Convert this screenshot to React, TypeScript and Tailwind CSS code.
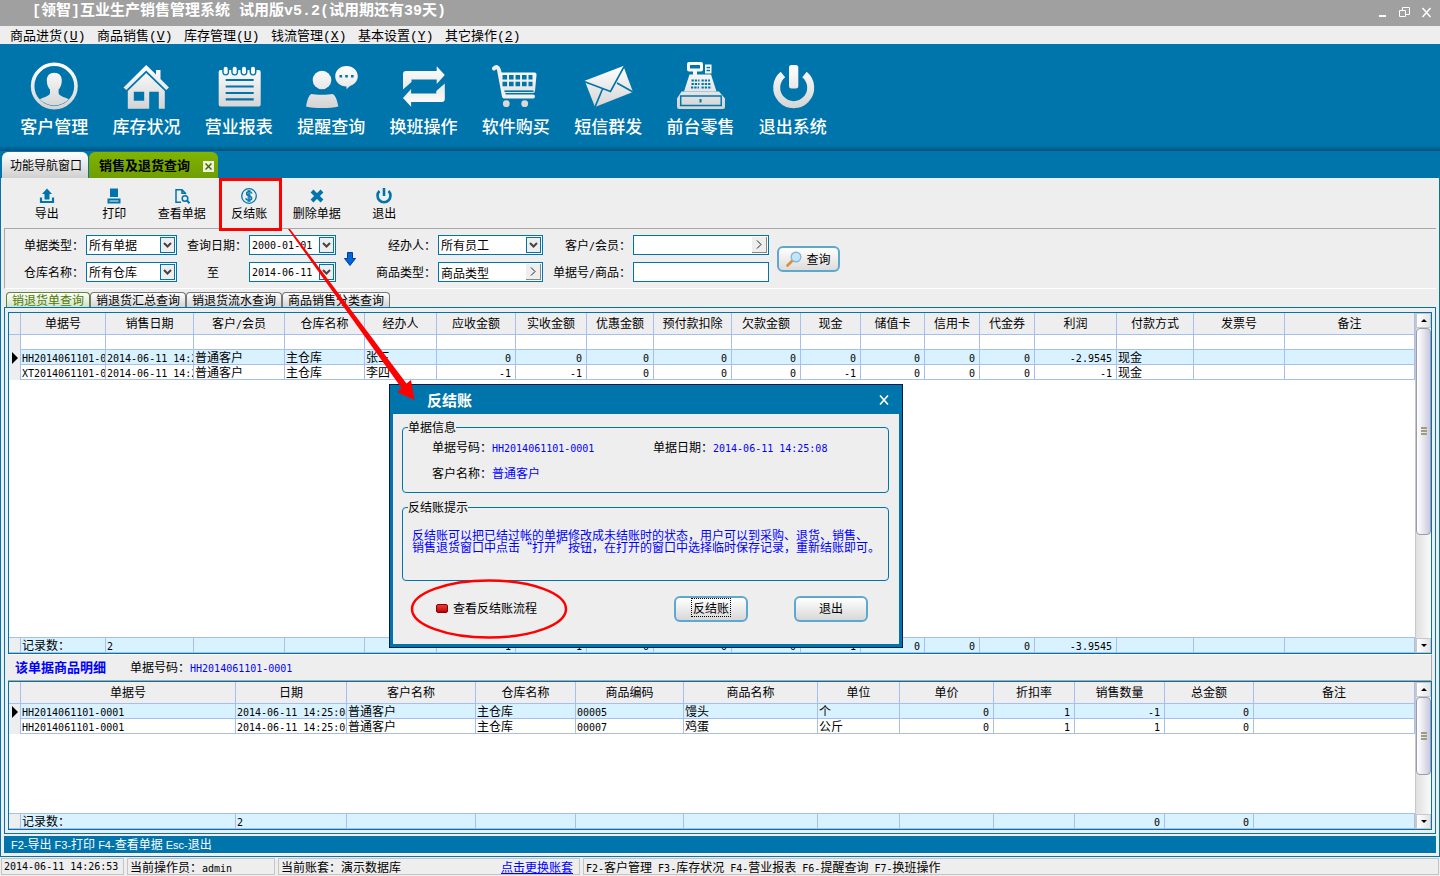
import React, { FC, ReactNode } from 'react'
import classNames from 'clsx'

// Wraps latin runs so that they keep a six pixel pitch next to 12px hanzi
const Txt: FC<{ children: string; latin?: string }> = ({
  children,
  latin = "font-['DejaVu_Sans_Mono',monospace] text-[10px] leading-none",
}) => (
  <>
    {children.split(/([\x20-\x7e]+)/).map((part, i) =>
      i % 2 ? (
        <span key={i} className={classNames('whitespace-pre', latin)}>
          {part}
        </span>
      ) : (
        part
      )
    )}
  </>
)

const menus = [
  ['商品进货', 'U'],
  ['商品销售', 'V'],
  ['库存管理', 'U'],
  ['钱流管理', 'X'],
  ['基本设置', 'Y'],
  ['其它操作', '2'],
]

const BLUE = '#0075ac'

const bigTools: { label: string; icon: ReactNode }[] = [
  {
    label: '客户管理',
    icon: (
      <>
        <circle cx="24.3" cy="24" r="21.7" fill="none" stroke="url(#metal)" strokeWidth="3.6" />
        <path d="M24.3 10.7c4.800 0 7.500 3 7.500 7.600 0 4.200-1.200 7.200-3.200 9.400v3.400c.4 3.400 6.200 4 10.200 6.100A20 20 0 0 1 9.800 37.200c4-2.100 9.800-2.700 10.200-6.100v-3.400c-2-2.200-3.200-5.200-3.200-9.400 0-4.600 2.700-7.600 7.500-7.600z" />
      </>
    ),
  },
  {
    label: '库存状况',
    icon: (
      <>
        <path d="M24.200 3 34 12.500V8h4.500v9L47 25.500 44.200 28 24.200 8.500 4.300 28 1.500 25.500z" />
        <path
          fillRule="evenodd"
          d="M24.200 11 42.800 29v17.700h-6v-17h-9.600v17H5.800V29zM11.800 29.700v9h10.400v-9z"
        />
      </>
    ),
  },
  {
    label: '营业报表',
    icon: (
      <>
        <rect x="3.700" y="8" width="42" height="36.500" rx="2" />
        {[10.7, 19.7, 29, 38].map((x) => (
          <React.Fragment key={x}>
            <path d={`M${x - 3.5} 7.500v2a3.500 4 0 0 0 7 0v-2z`} fill={BLUE} />
            <rect x={x - 2} y="4.700" width="4" height="7.500" rx="2" />
          </React.Fragment>
        ))}
        <path d="M10.700 18h28M10.700 24.500h28M10.700 31h28M10.700 37.300h28" stroke={BLUE} strokeWidth="2.200" />
      </>
    ),
  },
  {
    label: '提醒查询',
    icon: (
      <>
        <circle cx="15" cy="18" r="9.300" />
        <path d="M-1 44.500C.5 37 2 33 4.500 32c3.500 1 17 1 21 0 2.500 1 4.500 5 5.800 12.500-8 2-24 2-32.300 0z" />
        <path d="M39.500 4c6.500 0 11.300 4.500 11.300 10.300 0 4.600-3.300 8.300-7.800 9.700l-3.500 3.200v-2.700c-6.500 0-11.300-4.500-11.300-10.200S33 4 39.500 4z" />
        <path d="M32.500 14.300h2.600M38.200 14.300h2.600M44 14.300h2.600" stroke={BLUE} strokeWidth="2.600" />
      </>
    ),
  },
  {
    label: '换班操作',
    icon: (
      <>
        <path d="M4 27.500V12q0-3 3-3h30.700V4.300L45.800 13l-8.100 9v-4.500H12.500V20z" />
        <path
          transform="rotate(180 24.900 24.500)"
          d="M4 27.500V12q0-3 3-3h30.700V4.300L45.800 13l-8.100 9v-4.500H12.500V20z"
        />
      </>
    ),
  },
  {
    label: '软件购买',
    icon: (
      <>
        <path
          d="M2 6.500Q5.500 3 7 8l5 26.500h29"
          fill="none"
          stroke="#f0f0f0"
          strokeWidth="4"
          strokeLinecap="round"
          strokeLinejoin="round"
        />
        <path d="M8 10.500h34.500q2.300 0 2 2.500l-1.500 16q-.2 2-2 2H12z" />
        <path
          d="M10.500 15.300h30M10.500 22h30"
          stroke={BLUE}
          strokeWidth="4.600"
          strokeDasharray="4.600 1.900"
        />
        <path d="M12.500 29.200h29" stroke={BLUE} strokeWidth="1.600" />
        <circle cx="14.300" cy="41.700" r="3.400" />
        <circle cx="32.700" cy="41.700" r="3.400" />
      </>
    ),
  },
  {
    label: '短信群发',
    icon: (
      <>
        <path d="M.7 18.700 39.300 4 49 30 11 45z" />
        <path
          d="M.7 19.700 26.500 29.500 40 4.700M11 45l7.500-18M49 30 33 21"
          fill="none"
          stroke={BLUE}
          strokeWidth="1.700"
        />
      </>
    ),
  },
  {
    label: '前台零售',
    icon: (
      <>
        <path
          fillRule="evenodd"
          d="M13 0h12q2 0 2 2v5.500q0 2-2 2h-4V13h-4V9.500h-4q-2 0-2-2V2q0-2 2-2zm1 3v3.500h10V3z"
        />
        <path d="M29 2.500h6.500v9H29z" />
        <path d="M13.500 12.500h21.500l5.500 17H8z" />
        <path d="M30.500 5.500h3.500M30.500 8.500h3.500" stroke={BLUE} strokeWidth="1.300" />
        <path
          d="M15.500 18.500h8M15.500 22h8M15 25.500h8M25.500 18.500h8.500M25.500 22h9M25.500 25.500h10"
          stroke={BLUE}
          strokeWidth="2"
          strokeDasharray="2.300 1"
        />
        <path d="M5.500 29.500H43l6 7v8.500q0 2-2 2H3q-2 0-2-2v-8.500z" />
        <rect x="4.700" y="34" width="40.500" height="9.500" fill="none" stroke={BLUE} strokeWidth="1.500" />
        <path d="M24.500 37v3.500" stroke={BLUE} strokeWidth="2" />
      </>
    ),
  },
  {
    label: '退出系统',
    icon: (
      <>
        <path
          d="M35.500 12.500a17 17 0 1 1-21.600 0"
          fill="none"
          stroke="url(#metal)"
          strokeWidth="7"
        />
        <rect x="20" y="3" width="9.300" height="23.500" rx="2.500" />
      </>
    ),
  },
]

const smallTools: { label: string; icon: ReactNode }[] = [
  {
    label: '导出',
    icon: (
      <>
        <path d="M8 .5l5 5.500h-2.500v5.500h-5V6H3z" />
        <path d="M2 9.500v4.500h12V9.500" fill="none" stroke={BLUE} strokeWidth="2.200" />
      </>
    ),
  },
  {
    label: '打印',
    icon: (
      <>
        <path d="M4 .5h8V9H4zM1.500 10.500h13v5h-13z" />
        <path d="M3.500 13h9" stroke="#eeeeee" />
      </>
    ),
  },
  {
    label: '查看单据',
    icon: (
      <g fill="none" stroke={BLUE} strokeWidth="1.500">
        <path d="M7 14.300H2V1.700h6l3.500 3.600v1M8 1.700v3.600h3" />
        <circle cx="11" cy="10.500" r="2.800" />
        <path d="M13 12.500l2.500 2.800" strokeWidth="2" />
      </g>
    ),
  },
  {
    label: '反结账',
    icon: (
      <g fill="none" stroke={BLUE}>
        <circle cx="8" cy="8" r="7.300" strokeWidth="1.300" />
        <path
          d="M11 5.500C10.500 4 9.500 3.600 8 3.600 4.800 3.600 4.500 7 8 7.800c4 .9 3.500 4.500 0 4.500-2 0-3-.7-3.300-2.200M7.200 2v12M8.800 2v12"
          strokeWidth="1.200"
        />
      </g>
    ),
  },
  {
    label: '删除单据',
    icon: <path d="M3 3l10 10M13 3L3 13" stroke={BLUE} strokeWidth="4" />,
  },
  {
    label: '退出',
    icon: (
      <>
        <path d="M12.500 3a6.500 6.500 0 1 1-9 0" fill="none" stroke={BLUE} strokeWidth="2.600" />
        <path d="M6.700 0h2.600v8H6.700z" />
      </>
    ),
  },
]

type Column = [title: string, width: string, align?: 'right']

const salesColumns: Column[] = [
  ['单据号', 'w-[85px]'],
  ['销售日期', 'w-[88px]'],
  ['客户/会员', 'w-[91px]'],
  ['仓库名称', 'w-[80px]'],
  ['经办人', 'w-[72px]'],
  ['应收金额', 'w-[79px]', 'right'],
  ['实收金额', 'w-[71px]', 'right'],
  ['优惠金额', 'w-[67px]', 'right'],
  ['预付款扣除', 'w-[78px]', 'right'],
  ['欠款金额', 'w-[69px]', 'right'],
  ['现金', 'w-[60px]', 'right'],
  ['储值卡', 'w-[64px]', 'right'],
  ['信用卡', 'w-[55px]', 'right'],
  ['代金券', 'w-[55px]', 'right'],
  ['利润', 'w-[82px]', 'right'],
  ['付款方式', 'w-[77px]'],
  ['发票号', 'w-[91px]'],
  ['备注', ''],
]

const salesRows = [
  [],
  ['HH2014061101-0001', '2014-06-11 14:25:08', '普通客户', '主仓库', '张三', '0', '0', '0', '0', '0', '0', '0', '0', '0', '-2.9545', '现金'],
  ['XT2014061101-0001', '2014-06-11 14:25:08', '普通客户', '主仓库', '李四', '-1', '-1', '0', '0', '0', '-1', '0', '0', '0', '-1', '现金'],
]

const salesTotals = ['记录数：', '2', '', '', '', '-1', '-1', '0', '0', '0', '-1', '0', '0', '0', '-3.9545']

const detailColumns: Column[] = [
  ['单据号', 'w-[215px]'],
  ['日期', 'w-[111px]'],
  ['客户名称', 'w-[129px]'],
  ['仓库名称', 'w-[100px]'],
  ['商品编码', 'w-[108px]'],
  ['商品名称', 'w-[134px]'],
  ['单位', 'w-[82px]'],
  ['单价', 'w-[94px]', 'right'],
  ['折扣率', 'w-[81px]', 'right'],
  ['销售数量', 'w-[90px]', 'right'],
  ['总金额', 'w-[89px]', 'right'],
  ['备注', ''],
]

const detailRows = [
  ['HH2014061101-0001', '2014-06-11 14:25:08', '普通客户', '主仓库', '00005', '馒头', '个', '0', '1', '-1', '0'],
  ['HH2014061101-0001', '2014-06-11 14:25:08', '普通客户', '主仓库', '00007', '鸡蛋', '公斤', '0', '1', '1', '0'],
]

const detailTotals = ['记录数：', '2', '', '', '', '', '', '', '', '0', '0']

const GridCols: FC<{ columns: Column[] }> = ({ columns }) => (
  <colgroup>
    <col className="w-3" />
    {columns.map(([title, width]) => (
      <col key={title} className={width} />
    ))}
  </colgroup>
)

const GridCells: FC<{ columns: Column[]; values: string[] }> = ({ columns, values }) => (
  <>
    {columns.map(([title, , align], i) => (
      <td
        key={title}
        className={classNames(
          'h-[15px] overflow-hidden whitespace-nowrap border-r border-b border-[#a6bff0] p-0 leading-[14px]',
          align === 'right' ? 'pr-1 text-right' : 'pl-px'
        )}
      >
        <Txt>{values[i] ?? ''}</Txt>
      </td>
    ))}
  </>
)

const ScrollButton: FC<{ down?: boolean }> = ({ down }) => (
  <button
    aria-label={down ? '向下' : '向上'}
    className="flex h-[15px] shrink-0 items-center justify-center border border-[#c8c8c8] bg-linear-to-r from-white to-[#e4e4e4]"
  >
    <svg viewBox="0 0 6 3" className={classNames('h-[3px] w-1.5', down && 'rotate-180')}>
      <path d="M3 0l3 3H0z" />
    </svg>
  </button>
)

const ScrollBar: FC = () => (
  <div className="flex w-4 shrink-0 flex-col border-l border-[#c8c8c8]">
    <ScrollButton />
    <div className="flex-1 bg-linear-to-r from-[#e0e0e0] to-[#fafafa]">
      <div className="flex h-2/3 items-center justify-center rounded-sm border border-[#9a9ab0] bg-linear-to-r from-white via-[#e6e6ef] to-[#c9c9dd]">
        <div className="flex w-1.5 flex-col gap-px">
          <i className="h-0.5 bg-[#a39a80]" />
          <i className="h-0.5 bg-[#a39a80]" />
          <i className="h-0.5 bg-[#a39a80]" />
        </div>
      </div>
    </div>
    <ScrollButton down />
  </div>
)

const DataGrid: FC<{
  columns: Column[]
  rows: string[][]
  totals: string[]
  current: number
  className?: string
}> = ({ columns, rows, totals, current, className }) => (
  <div className={classNames('flex border border-[#0075ac] bg-white', className)}>
    <div className="flex min-w-0 flex-1 flex-col justify-between">
      <table className="w-full table-fixed border-separate border-spacing-0">
        <GridCols columns={columns} />
        <thead>
          <tr>
            <th className="h-[22px] border-r border-b border-[#a6bff0] bg-[#eeeeee] p-0" />
            {columns.map(([title]) => (
              <th
                key={title}
                className="h-[22px] border-r border-b border-[#a6bff0] bg-[#eeeeee] p-0 pb-0.5 text-center font-normal"
              >
                <Txt>{title}</Txt>
              </th>
            ))}
          </tr>
        </thead>
        <tbody>
          {rows.map((row, i) => (
            <tr key={i} className={i === current ? 'bg-[#d9f2ff]' : 'bg-white'}>
              <td className="h-[15px] border-r border-[#a6bff0] bg-[#eeeeee] p-0">
                {i === current && (
                  <svg viewBox="0 0 6 12" className="ml-[3px] h-3 w-1.5">
                    <path d="M0 0l6 6-6 6z" />
                  </svg>
                )}
              </td>
              <GridCells columns={columns} values={row} />
            </tr>
          ))}
        </tbody>
      </table>
      <table className="w-full table-fixed border-separate border-spacing-0 border-t border-[#a6bff0]">
        <GridCols columns={columns} />
        <tbody>
          <tr className="bg-[#d9f2ff]">
            <td className="h-[15px] border-r border-b border-[#a6bff0] bg-[#eeeeee] p-0" />
            <GridCells columns={columns} values={totals} />
          </tr>
        </tbody>
      </table>
    </div>
    <ScrollBar />
  </div>
)

const fieldClass =
  'h-5 w-full appearance-none rounded-none border border-[#0075ac] bg-white pl-0.5 text-[12px] leading-none text-black outline-none'

const DropMark: FC = () => (
  <span className="pointer-events-none absolute top-0.5 right-0.5 flex h-4 w-[15px] items-center justify-center border border-[#0075ac] bg-[#eeeeee]">
    <svg viewBox="0 0 9 6" className="h-1.5 w-[9px]">
      <path d="M1 1l3.500 3.500L8 1" fill="none" stroke="#444" strokeWidth="2" />
    </svg>
  </span>
)

const MoreButton: FC<{ label: string }> = ({ label }) => (
  <button
    aria-label={label}
    className="absolute top-0.5 right-0.5 flex h-4 w-[15px] items-center justify-center border-r border-b border-[#888888] bg-[#eeeeee]"
  >
    <svg viewBox="0 0 6 9" className="h-[9px] w-1.5">
      <path d="M1 .5l4 4-4 4" fill="none" stroke="#222" />
    </svg>
  </button>
)

const FieldLabel: FC<{ id: string; children: string }> = ({ id, children }) => (
  <label htmlFor={id} className="pr-0.5 text-right whitespace-nowrap">
    <Txt>{children}</Txt>
  </label>
)

const SelectField: FC<{ id: string; value: string }> = ({ id, value }) => (
  <div className="relative">
    <select id={id} className={fieldClass}>
      <option>{value}</option>
    </select>
    <DropMark />
  </div>
)

const DateField: FC<{ id: string; value: string }> = ({ id, value }) => (
  <div className="relative">
    <input
      id={id}
      defaultValue={value}
      className="h-5 w-full border border-[#0075ac] bg-white pl-0.5 font-['DejaVu_Sans_Mono',monospace] text-[10px] outline-none"
    />
    <DropMark />
  </div>
)

const FilterPanel: FC = () => (
  <div className="mx-[3px] flex h-[61px] items-center border-t border-b border-l border-t-[#a8a8a8] border-b-white border-l-[#a8a8a8]">
    <div className="grid grid-cols-[81px_91px_72px_87px_28px_74px_105px_90px_136px] items-center gap-y-[7px]">
      <FieldLabel id="billType">单据类型：</FieldLabel>
      <SelectField id="billType" value="所有单据" />
      <FieldLabel id="dateFrom">查询日期：</FieldLabel>
      <DateField id="dateFrom" value="2000-01-01" />
      <svg viewBox="0 0 12 14" className="row-span-2 h-3.5 w-3 justify-self-center">
        <path d="M3.500.5h5v6h3L6 13.500.5 6.500h3z" fill="#0066dd" stroke="#003c99" />
      </svg>
      <FieldLabel id="staff">经办人：</FieldLabel>
      <SelectField id="staff" value="所有员工" />
      <FieldLabel id="member">客户/会员：</FieldLabel>
      <div className="relative">
        <input id="member" className={fieldClass} />
        <MoreButton label="选择客户" />
      </div>
      <FieldLabel id="store">仓库名称：</FieldLabel>
      <SelectField id="store" value="所有仓库" />
      <label htmlFor="dateTo" className="text-center">
        至
      </label>
      <DateField id="dateTo" value="2014-06-11" />
      <FieldLabel id="goodsType">商品类型：</FieldLabel>
      <div className="relative">
        <input id="goodsType" defaultValue="商品类型" className={fieldClass} />
        <MoreButton label="选择类型" />
      </div>
      <FieldLabel id="billNo">单据号/商品：</FieldLabel>
      <input id="billNo" className={fieldClass} />
    </div>
    <button className="ml-2 flex h-[26px] w-[63px] items-center justify-center gap-1 rounded-md border-2 border-[#5fa8cd] bg-linear-to-b from-white to-[#dcdcdc]">
      <svg viewBox="0 0 16 16" className="size-4">
        <path d="M1.500 14.500l5-5" stroke="#d98f3c" strokeWidth="2.600" strokeLinecap="round" />
        <circle cx="10" cy="6" r="4.800" fill="#bfe6fb" stroke="#8fb4cc" strokeWidth="1.400" />
      </svg>
      查询
    </button>
  </div>
)

const dialogButton =
  'h-[26px] w-[74px] rounded-md border-2 border-[#5fa8cd] bg-linear-to-b from-white to-[#d8d8d8] pb-0.5'

const ReverseDialog: FC = () => (
  <div
    role="dialog"
    aria-label="反结账"
    className="absolute top-[384px] left-[389px] w-[514px] border border-[#001c4a] bg-[#0075ac] px-[3px] pb-[3px]"
  >
    <div className="flex h-[29px] items-center justify-between pr-1.5 pl-[34px] text-white">
      <h2 className="text-[15px] font-bold">反结账</h2>
      <button aria-label="关闭" className="p-1">
        <svg viewBox="0 0 10 10" className="size-2.5">
          <path d="M1 .5l8 9M9 .5l-8 9" stroke="white" strokeWidth="1.600" />
        </svg>
      </button>
    </div>
    <div className="h-[230px] bg-[#eeeeee] pt-1 pr-2.5 pl-[9px]">
      <fieldset className="h-[75px] rounded-[4px] border border-[#0075ac] px-[5px]">
        <legend className="leading-[18px]">单据信息</legend>
        <div className="mt-0.5 grid grid-cols-[221px_1fr] gap-y-2 pl-6 leading-[18px]">
          <p>
            单据号码：
            <span className="text-[#0000ff]">
              <Txt>HH2014061101-0001</Txt>
            </span>
          </p>
          <p>
            单据日期：
            <span className="text-[#0000ff]">
              <Txt>2014-06-11 14:25:08</Txt>
            </span>
          </p>
          <p>
            客户名称：<span className="text-[#0000ff]">普通客户</span>
          </p>
        </div>
      </fieldset>
      <fieldset className="mt-[5px] h-[83px] rounded-[4px] border border-[#0075ac] px-[5px]">
        <legend className="leading-[18px]">反结账提示</legend>
        <p className="mt-[13px] pl-1 leading-[12px] whitespace-nowrap text-[#0000ff]">
          反结账可以把已结过帐的单据修改成未结账时的状态，用户可以到采购、退货、销售、
          <br />
          销售退货窗口中点击“打开”按钮，在打开的窗口中选择临时保存记录，重新结账即可。
        </p>
      </fieldset>
      <div className="relative mt-[15px] flex items-center">
        <a href="#flow" className="mr-auto flex items-center gap-[5px] pb-0.5 pl-[34px]">
          <span className="h-[9px] w-3 rounded-[2px] border border-[#8b0000] bg-linear-to-b from-[#e83a3a] to-[#b80000]" />
          查看反结账流程
        </a>
        <button className={dialogButton}>
          <span className="border border-dotted border-black px-px">反结账</span>
        </button>
        <button className={classNames(dialogButton, 'mr-[21px] ml-[46px]')}>退出</button>
        <svg
          viewBox="0 0 160 62"
          className="pointer-events-none absolute top-1/2 left-[7px] h-[62px] w-[160px] -translate-y-1/2"
        >
          <ellipse cx="80" cy="31" rx="77" ry="28.500" fill="none" stroke="#ff0000" strokeWidth="2.500" />
        </svg>
      </div>
    </div>
  </div>
)

const queryTabs = ['销退货单查询', '销退货汇总查询', '销退货流水查询', '商品销售分类查询']

const statusPanel = 'flex items-center border border-[#c4c4c4] px-0.5'

const App: FC = () => {
  return (
    <div className="relative flex min-h-screen flex-col overflow-hidden bg-[#eeeeee] font-['Noto_Sans_CJK_SC',sans-serif] text-[12px] leading-[14px] text-black">
      <svg className="absolute size-0">
        <defs>
          <linearGradient id="metal" gradientUnits="userSpaceOnUse" x1="0" y1="4" x2="0" y2="46">
            <stop offset="0" stopColor="#ffffff" />
            <stop offset="1" stopColor="#d4d4d4" />
          </linearGradient>
        </defs>
      </svg>

      <header className="flex h-[26px] items-center justify-between bg-[#a0a0a0] pr-2 pb-0.5 pl-8 text-white">
        <h1 className="font-['Liberation_Mono','Noto_Sans_CJK_SC',monospace] text-[15px] font-bold whitespace-pre">
          [领智]互业生产销售管理系统 试用版v5.2(试用期还有39天)
        </h1>
        <div className="flex gap-[11px]">
          <button aria-label="最小化">
            <svg viewBox="0 0 11 11" className="size-[11px]">
              <path d="M2 9h7" stroke="white" strokeWidth="2" />
            </svg>
          </button>
          <button aria-label="还原">
            <svg viewBox="0 0 11 11" className="size-[11px]">
              <path d="M.5 3.500h6v6h-6zM3.500 3.500v-3h7v7h-4" fill="none" stroke="white" />
            </svg>
          </button>
          <button aria-label="关闭">
            <svg viewBox="0 0 11 11" className="size-[11px]">
              <path d="M1.500 1l8 9M9.500 1l-8 9" stroke="white" strokeWidth="1.500" />
            </svg>
          </button>
        </div>
      </header>

      <nav className="flex h-[18px] items-center pl-2.5 text-[13px]">
        {menus.map(([name, key]) => (
          <button key={name} className="w-[87px] text-left whitespace-nowrap">
            {name}
            <span className="font-['Liberation_Mono',monospace] leading-none">
              (<u>{key}</u>)
            </span>
          </button>
        ))}
      </nav>

      <div className="h-[107px] bg-[#0075ac] bg-linear-to-b from-[#0075ac] from-95% to-[#00527c] pl-2">
        <div className="grid w-[831px] grid-cols-9 pt-[18px]">
          {bigTools.map(({ label, icon }) => (
            <button key={label} className="flex flex-col items-center gap-1.5 text-white">
              <svg viewBox="0 0 48 48" fill="url(#metal)" className="size-12 overflow-visible">
                {icon}
              </svg>
              <span className="text-[17px] leading-[20px] font-medium">{label}</span>
            </button>
          ))}
        </div>
      </div>

      <div className="flex h-[27px] items-end gap-px bg-[#0075ac] pl-0.5">
        <button className="h-[26px] w-[86px] rounded-t-md bg-linear-to-b from-white to-[#d0d0d0] pl-0.5">
          功能导航窗口
        </button>
        <div className="flex h-[26px] w-[129px] items-center justify-between rounded-t-md bg-linear-to-b from-[#80b400] to-[#6f9e00] pr-1 pl-2.5">
          <span className="text-[13px] font-bold">销售及退货查询</span>
          <button aria-label="关闭" className="mt-0.5 flex size-[11px] items-center justify-center bg-[#eef4dc]">
            <svg viewBox="0 0 7 7" className="size-[7px]">
              <path d="M.5.5l6 6M6.500.5l-6 6" stroke="#4b6a00" strokeWidth="1.500" />
            </svg>
          </button>
        </div>
      </div>

      <main className="flex flex-1 flex-col border-x border-b border-[#0075ac]">
        <div className="h-[50px] pt-2.5 pl-3">
          <div className="grid w-[405px] grid-cols-6">
            {smallTools.map(({ label, icon }) => (
              <button key={label} className="flex flex-col items-center gap-0.5">
                <svg viewBox="0 0 16 16" fill={BLUE} className="size-4">
                  {icon}
                </svg>
                {label}
              </button>
            ))}
          </div>
        </div>

        <FilterPanel />

        <div className="mt-[3px] flex h-[15px] pl-[5px]">
          {queryTabs.map((tab, i) => (
            <button
              key={tab}
              className={classNames(
                'rounded-t-[4px] border border-b-0 px-[5px] whitespace-nowrap',
                i === 0
                  ? 'border-[#5a8a2a] bg-linear-to-b from-white to-[#cfe3cc] text-[#557a00]'
                  : 'border-[#777777] bg-linear-to-b from-white to-[#d4d4d4]'
              )}
            >
              {tab}
            </button>
          ))}
        </div>

        <section className="mx-[3px] flex flex-1 flex-col border border-[#0075ac] px-[3px] pt-1 pb-[3px]">
          <DataGrid
            columns={salesColumns}
            rows={salesRows}
            totals={salesTotals}
            current={1}
            className="flex-1"
          />
          <div className="flex h-[27px] items-center gap-6 border-t border-r border-b border-t-white border-r-[#a8a8a8] border-b-[#a8a8a8] pb-px pl-[7px]">
            <h2 className="text-[13px] font-bold text-[#0000ff]">该单据商品明细</h2>
            <p>
              单据号码：
              <span className="text-[#0000ff]">
                <Txt>HH2014061101-0001</Txt>
              </span>
            </p>
          </div>
          <DataGrid
            columns={detailColumns}
            rows={detailRows}
            totals={detailTotals}
            current={0}
            className="h-[149px]"
          />
        </section>

        <p className="mx-[3px] mt-0.5 mb-[3px] flex h-[17px] items-center bg-[#0075ac] pb-0.5 pl-[7px] text-white">
          <span>
            <Txt latin="font-['Liberation_Sans',sans-serif] text-[11px] leading-none">
              F2-导出 F3-打印 F4-查看单据 Esc-退出
            </Txt>
          </span>
        </p>
      </main>

      <footer className="flex h-[19px] gap-[3px] px-px py-px whitespace-nowrap">
        <div className={classNames(statusPanel, 'w-[123px]')}>
          <Txt>2014-06-11 14:26:53</Txt>
        </div>
        <div className={classNames(statusPanel, 'w-[148px]')}>
          <span>
            <Txt>当前操作员：admin</Txt>
          </span>
        </div>
        <div className={classNames(statusPanel, 'w-[302px] justify-between')}>
          <span>当前账套：演示数据库</span>
          <a href="#account" className="mr-1 text-[#0000ff] underline">
            点击更换账套
          </a>
        </div>
        <div className={classNames(statusPanel, 'flex-1')}>
          <span>
            <Txt>F2-客户管理 F3-库存状况 F4-营业报表 F6-提醒查询 F7-换班操作</Txt>
          </span>
        </div>
      </footer>

      <ReverseDialog />

      {/* tutorial marks */}
      <div className="pointer-events-none absolute top-[178px] left-[219px] h-[53px] w-[63px] border-3 border-[#ff0000]" />
      <svg
        viewBox="0 0 130 174"
        className="pointer-events-none absolute top-[228px] left-[287px] h-[174px] w-[130px]"
      >
        <path d="M1 1l2 0 116.500 154.500L124 152l3.500 20L110 164l4.500-4z" fill="#ff0000" />
      </svg>
    </div>
  )
}

export default App
